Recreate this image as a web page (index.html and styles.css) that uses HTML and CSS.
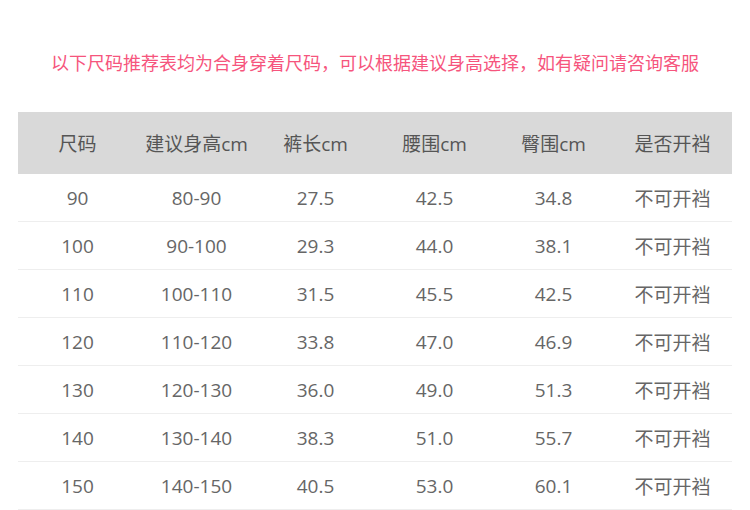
FILE: index.html
```html
<!DOCTYPE html>
<html lang="zh">
<head>
<meta charset="utf-8">
<link rel="stylesheet" href="styles.css">
</head>
<body>
<div class="page">
  <p class="notice">以下尺码推荐表均为合身穿着尺码，可以根据建议身高选择，如有疑问请咨询客服</p>
  <table class="size-table">
    <thead>
      <tr><th>尺码</th><th>建议身高cm</th><th>裤长cm</th><th>腰围cm</th><th>臀围cm</th><th>是否开裆</th></tr>
    </thead>
    <tbody>
      <tr><td>90</td><td>80-90</td><td>27.5</td><td>42.5</td><td>34.8</td><td>不可开裆</td></tr>
      <tr><td>100</td><td>90-100</td><td>29.3</td><td>44.0</td><td>38.1</td><td>不可开裆</td></tr>
      <tr><td>110</td><td>100-110</td><td>31.5</td><td>45.5</td><td>42.5</td><td>不可开裆</td></tr>
      <tr><td>120</td><td>110-120</td><td>33.8</td><td>47.0</td><td>46.9</td><td>不可开裆</td></tr>
      <tr><td>130</td><td>120-130</td><td>36.0</td><td>49.0</td><td>51.3</td><td>不可开裆</td></tr>
      <tr><td>140</td><td>130-140</td><td>38.3</td><td>51.0</td><td>55.7</td><td>不可开裆</td></tr>
      <tr><td>150</td><td>140-150</td><td>40.5</td><td>53.0</td><td>60.1</td><td>不可开裆</td></tr>
    </tbody>
  </table>
</div>
</body>
</html>
```

FILE: styles.css
```css
html, body {
  margin: 0;
  padding: 0;
  background: #fff;
}
.page {
  width: 750px;
  height: 510px;
  overflow: hidden;
  font-family: "Open Sans", "Noto Sans CJK SC", sans-serif;
}
.notice {
  margin: 0;
  padding-top: 50px;
  height: 24px;
  line-height: 24px;
  text-align: center;
  color: #f6557d;
  font-size: 18px;
  font-family: "Noto Sans CJK SC", sans-serif;
}
.size-table {
  margin: 38px 0 0 18px;
  width: 714px;
  border-collapse: collapse;
  table-layout: fixed;
}
.size-table th {
  height: 62px;
  padding: 0;
  background: #d9d9d9;
  font-weight: normal;
  font-size: 19px;
  color: #555;
  text-align: center;
}
.size-table td {
  height: 47px;
  padding: 0;
  border-bottom: 1px solid #eeeeee;
  font-size: 19px;
  color: #666;
  text-align: center;
}
```
